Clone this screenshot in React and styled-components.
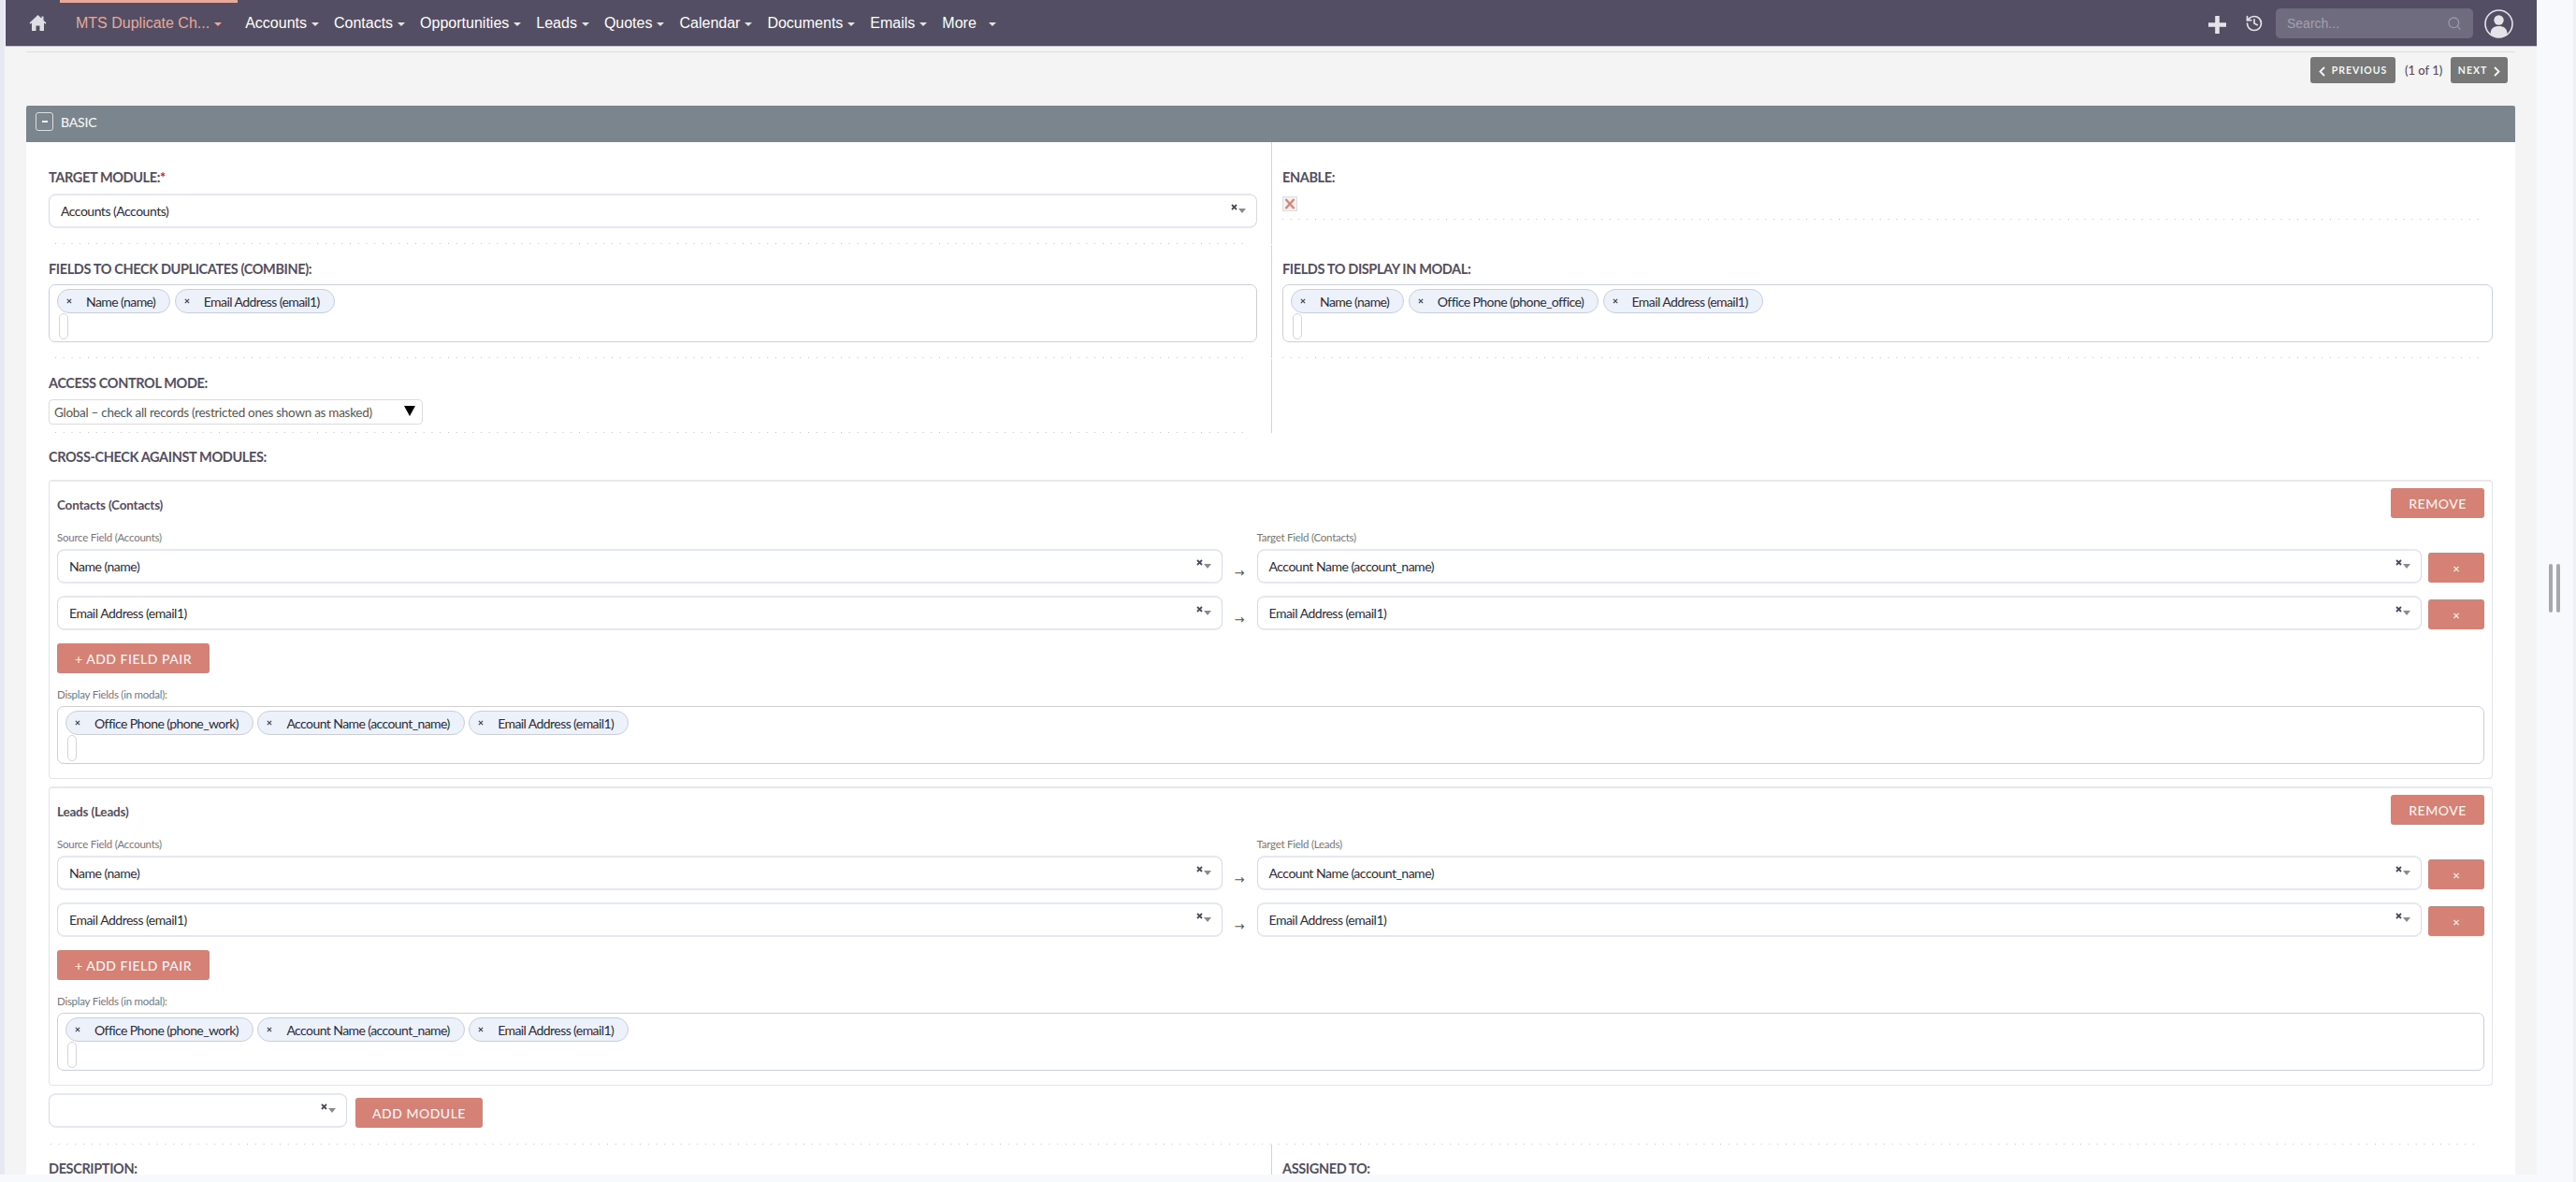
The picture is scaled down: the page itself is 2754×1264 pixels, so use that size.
import React from "react";
import styled, { createGlobalStyle } from "styled-components";
import { History, Search } from "lucide-react";

const Global = createGlobalStyle`
  html, body { margin: 0; padding: 0; background: #f7f9fd; }
  * { box-sizing: border-box; }
  body { font-family: "Lato", "Liberation Sans", sans-serif; overflow: hidden; }
`;

const Page = styled.div`
  display: flex; width: 2754px; height: 1264px; overflow: hidden; background: #f7f9fd;
`;
const LeftRail = styled.div`
  width: 6px; height: 1256px; background: #e6e9f1; border-right: 1px solid #f3f5fa; flex: none;
`;
const Shell = styled.div`
  width: 2706px; height: 1256px; flex: none; overflow: hidden; background: #f4f4f4;
`;
const Gutter = styled.div`
  flex: 1; border-right: 3px solid #eef0f7; padding: 603px 0 0 13px; display: flex; gap: 4px; align-items: flex-start;
`;
const GripBar = styled.span`
  width: 4px; height: 52px; border-radius: 2px; background: #a8a8a8;
`;

const Nav = styled.nav`
  height: 50px; background: #534e63; border-bottom: 1px solid #c4c4ca; display: flex; align-items: center;
  padding: 0 25px; font-family: "Liberation Sans", Arial, sans-serif; font-size: 16px; color: #fff;
`;
const HomeIcon = styled.svg`
  width: 19px; height: 19px; flex: none; margin-right: 14px; margin-top: -1px;
`;
const Menu = styled.div`display: flex; align-items: center; gap: 16px;`;
const MenuItem = styled.div`
  display: flex; align-items: center; height: 49px; position: relative; white-space: nowrap;
  color: ${p => (p.$active ? "#e8a99c" : "#fff")};
  padding: ${p => (p.$active ? "0 17px" : "0")};
  margin-right: ${p => (p.$active ? "-8px" : "0")};
  ${p => p.$active && `&::before { content: ""; position: absolute; left: 0; right: 0; top: 0; height: 3px; background: #e8a99c; }`}
`;
const Caret = styled.i`
  width: 0; height: 0; margin-left: ${p => p.$wide ? "13px" : "5px"}; margin-top: 2px;
  border-left: 4px solid transparent; border-right: 4px solid transparent;
  border-top: 4px solid ${p => (p.$active ? "#e8a99c" : "#e4e4e8")};
`;
const NavRight = styled.div`margin-left: auto; display: flex; align-items: center;`;
const PlusIcon = styled.svg`width: 19px; height: 19px; margin-right: 20px; margin-top: 3px;`;
const SearchBox = styled.div`
  width: 211px; height: 32px; border-radius: 5px; background: #706c7f; display: flex; align-items: center;
  justify-content: space-between; padding: 0 12px; margin: 0 12px 0 13px; color: #a3a0ae; font-size: 14px;
`;
const UserIcon = styled.svg`width: 31px; height: 31px; margin-top: 2px;`;

const Content = styled.div`padding: 5px 23px 0 22px;`;
const TopLine = styled.div`height: 1px; background: #dedede;`;
const Pager = styled.div`
  display: flex; justify-content: flex-end; align-items: center; padding: 5px 8px 0 0; height: 33px;
`;
const PagerButton = styled.div`
  height: 28px; background: #777; border-radius: 3px; color: #f6f6f6; display: flex; align-items: center;
  justify-content: center; gap: 7px; font-size: 10.5px; font-weight: 700; letter-spacing: 0.95px;
  width: ${p => p.$w}px;
`;
const PagerText = styled.span`
  color: #534e63; font-size: 13px; font-weight: 500; margin: 0 10px; width: 39px; white-space: nowrap;
`;

const Panel = styled.section`margin-top: 24px; background: #fff;`;
const PanelHead = styled.header`
  height: 39px; background: #7b858d; border-radius: 2px 2px 0 0; display: flex; align-items: center; gap: 8px;
  padding: 0 0 5px 10px; color: #f5f5f5; font-size: 14px; font-weight: 500; letter-spacing: -0.2px;
`;
const Toggle = styled.span`
  width: 19px; height: 20px; border: 1px solid #dcdfe2; border-radius: 3px; display: flex; align-items: center; justify-content: center;
  &::before { content: ""; width: 6px; height: 1.5px; background: #f5f5f5; }
`;
const PanelBody = styled.div`padding: 0 24px 0 24px;`;

const FormRow = styled.div`
  display: grid; grid-template-columns: 1308px 1fr; margin-bottom: 1px;
`;
const LeftCell = styled.div`
  border-right: 1px solid #ccd2de; padding: ${p => p.$top}px 15px 0 0;
`;
const RightCell = styled.div`
  padding: ${p => p.$top}px 0 0 11px;
`;
const Label = styled.div`
  color: #534e63; font-size: 14.5px; font-weight: 700; line-height: 20px; letter-spacing: -0.38px; white-space: nowrap;
  margin-bottom: ${p => p.$gap ?? 7}px;
  & b { color: #e02020; font-weight: 700; }
`;
const Dotted = styled.div`
  height: 1px; margin: ${p => p.$top}px ${p => p.$right ?? 0}px 0 ${p => p.$left ?? 7}px;
  background-image: linear-gradient(to right, #bfc2c9 1.2px, transparent 1.2px);
  background-size: 8.75px 1px;
`;
const SelectBox = styled.div`
  height: 37px; display: flex; align-items: center; background: #fff; border-radius: 8px; padding: 0 11px 0 12px;
  border: 1px solid #d6dbe8; border-top: 2px solid #e4e8f0; border-bottom: 2px solid #e4e8f0;
  color: #2c2c3a; font-size: 14px; letter-spacing: -0.5px; width: ${p => (p.$w ? p.$w + "px" : "auto")};
`;
const SelectValue = styled.span`flex: 1; white-space: nowrap;`;
const ClearMark = styled.svg`
  width: 7px; height: 7px; align-self: flex-start; margin-top: 9px; margin-right: 1px; flex: none;
`;
const SelectArrow = styled.i`
  align-self: flex-start; margin-top: 14px; flex: none; width: 0; height: 0;
  border-left: 4px solid transparent; border-right: 4px solid transparent; border-top: 5px solid #8b8b8b;
`;
const MultiBox = styled.div`
  height: 62px; border: 1px solid #c9cfde; border-radius: 7px; padding: 4px 8px 0; background: #fff;
`;
const ChipRow = styled.div`display: flex; gap: 4.5px;`;
const Chip = styled.span`
  height: 26px; display: flex; align-items: center; background: #edf2fa; border: 1px solid #c6cfe0; border-radius: 13px;
  padding: 0 15px 0 9px; font-size: 14px; letter-spacing: -0.58px; color: #2c2c3a; white-space: nowrap;
`;
const ChipX = styled.svg`width: 6px; height: 6px; margin-right: 15px; flex: none;`;
const InputPill = styled.div`
  width: 10px; height: 28px; margin-left: 2px; border: 1px solid #d2d5dd; border-radius: 5px;
`;
const CheckBox = styled.div`
  width: 16px; height: 16px; background: #f2f2f2; border: 1px solid #dcdde2; display: flex; align-items: center; justify-content: center;
`;
const Cross = styled.div`margin-top: 16px;`;
const ModuleCard = styled.article`
  height: 320px; border: 1px solid #e1e4ec; border-top: 2px solid #e7e9ef; border-radius: 4px; padding: 7px 8px 0; margin-bottom: 8px;
`;
const CardHead = styled.div`display: flex; justify-content: space-between; align-items: flex-start;`;
const CardTitle = styled.h3`
  margin: 8px 0 0; font-size: 13.5px; line-height: 20px; font-weight: 700; letter-spacing: -0.2px; color: #534e63;
`;
const CoralButton = styled.button`
  height: 32px; width: ${p => p.$w}px; border: 0; border-radius: 3px; background: #d58175; color: #fbf3f1; padding: 0;
  font: 500 14px "Lato", sans-serif; letter-spacing: 0.5px; flex: none; white-space: nowrap;
`;
const PairGrid = styled.div`
  display: grid; grid-template-columns: 1fr 37px 1fr 67px; margin-top: ${p => p.$top}px;
`;
const SmallLabel = styled.div`
  color: #777; font-size: 11.5px; line-height: 14px; letter-spacing: -0.25px; white-space: nowrap; margin-top: ${p => p.$top ?? 0}px; margin-bottom: ${p => p.$bottom ?? 0}px;
`;
const FlowArrow = styled.span`
  font-size: 13px; line-height: 16px; color: #555; text-align: center; padding-top: 18px; font-family: "DejaVu Sans", sans-serif;
`;
const RemovePair = styled(CoralButton)`
  width: 60px; margin: 4px 0 0 7px; font-size: 13px; padding-top: 2px; letter-spacing: 0;
`;
const AddPair = styled(CoralButton)`margin: 14px 0 16px; display: block;`;
const AddRow = styled.div`display: flex; align-items: flex-end; gap: 9px;`;
const Rest = styled.div`height: 40px;`;
const NativeSelect = styled.div`
  width: 400px; height: 27px; border: 1px solid #dcdcdf; border-radius: 4px; padding: 0 7px 0 5px; display: flex; align-items: center;
  justify-content: space-between; color: #555; font-size: 13.5px; letter-spacing: -0.28px; white-space: nowrap;
`;
const NativeArrow = styled.i`
  width: 0; height: 0; margin-top: -2px; border-left: 6.5px solid transparent; border-right: 6.5px solid transparent; border-top: 11px solid #000;
`;

const X = ({ as: Comp, color = "#4a4a5e", width = 1.8 }) => (
  <Comp viewBox="0 0 7 7">
    <path d="M1 1L6 6M6 1L1 6" stroke={color} strokeWidth={width} fill="none" />
  </Comp>
);

const Select = ({ value, w }) => (
  <SelectBox $w={w}>
    <SelectValue>{value}</SelectValue>
    <X as={ClearMark} />
    <SelectArrow />
  </SelectBox>
);

const Multi = ({ items }) => (
  <MultiBox>
    <ChipRow>
      {items.map(t => (
        <Chip key={t}>
          <X as={ChipX} width={1.5} />
          {t}
        </Chip>
      ))}
    </ChipRow>
    <InputPill />
  </MultiBox>
);

const Chevron = ({ left }) => (
  <svg width="7" height="11" viewBox="0 0 7 11" style={{ marginTop: 2 }}>
    <path d={left ? "M6 1L1.5 5.5L6 10" : "M1 1L5.5 5.5L1 10"} stroke="#f6f6f6" strokeWidth="1.8" fill="none" />
  </svg>
);

const menus = ["Accounts", "Contacts", "Opportunities", "Leads", "Quotes", "Calendar", "Documents", "Emails"];
const displayItems = ["Office Phone (phone_work)", "Account Name (account_name)", "Email Address (email1)"];

const ModuleBlock = ({ title, target }) => (
  <ModuleCard>
    <CardHead>
      <CardTitle>{title}</CardTitle>
      <CoralButton $w={100}>REMOVE</CoralButton>
    </CardHead>
    <PairGrid $top={14}>
      <SmallLabel $bottom={5}>Source Field (Accounts)</SmallLabel>
      <span />
      <SmallLabel $bottom={5}>Target Field ({target})</SmallLabel>
      <span />
    </PairGrid>
    <PairGrid $top={0}>
      <Select value="Name (name)" />
      <FlowArrow>→</FlowArrow>
      <Select value="Account Name (account_name)" />
      <RemovePair>×</RemovePair>
    </PairGrid>
    <PairGrid $top={13}>
      <Select value="Email Address (email1)" />
      <FlowArrow>→</FlowArrow>
      <Select value="Email Address (email1)" />
      <RemovePair>×</RemovePair>
    </PairGrid>
    <AddPair $w={163}>+ ADD FIELD PAIR</AddPair>
    <SmallLabel $bottom={5}>Display Fields (in modal):</SmallLabel>
    <Multi items={displayItems} />
  </ModuleCard>
);

export default function App() {
  return (
    <Page>
      <Global />
      <LeftRail />
      <Shell>
        <Nav>
          <HomeIcon viewBox="0 0 19 19">
            <path d="M9.5 1L0.5 9.6L1.6 10.8L3 9.6V18H7.5V12.5H11.5V18H16V9.6L17.4 10.8L18.5 9.6L15.5 6.8V2.5H13.5V4.8Z" fill="#dedee3" />
          </HomeIcon>
          <Menu>
            <MenuItem $active>
              MTS Duplicate Ch...
              <Caret $active />
            </MenuItem>
            {menus.map(m => (
              <MenuItem key={m}>
                {m}
                <Caret />
              </MenuItem>
            ))}
            <MenuItem>
              More
              <Caret $wide />
            </MenuItem>
          </Menu>
          <NavRight>
            <PlusIcon viewBox="0 0 19 19">
              <path d="M7.2 0H11.8V7.2H19V11.8H11.8V19H7.2V11.8H0V7.2H7.2Z" fill="#e4e4e8" />
            </PlusIcon>
            <History size={20} color="#e4e4e8" strokeWidth={2} />
            <SearchBox>
              <span>Search...</span>
              <Search size={16} color="#9a97a6" strokeWidth={2} />
            </SearchBox>
            <UserIcon viewBox="0 0 31 31">
              <circle cx="15.5" cy="15.5" r="14.5" fill="none" stroke="#e4e4e8" strokeWidth="1.6" />
              <circle cx="15.5" cy="11.5" r="5.2" fill="#e4e4e8" />
              <path d="M6.5 26.5C6.5 20.5 10 18 15.5 18C21 18 24.5 20.5 24.5 26.5C22 28.7 19 30 15.5 30C12 30 9 28.7 6.5 26.5Z" fill="#e4e4e8" />
            </UserIcon>
          </NavRight>
        </Nav>
        <Content>
          <TopLine />
          <Pager>
            <PagerButton $w={91}>
              <Chevron left />
              PREVIOUS
            </PagerButton>
            <PagerText>(1 of 1)</PagerText>
            <PagerButton $w={61}>
              NEXT
              <Chevron />
            </PagerButton>
          </Pager>
          <Panel>
            <PanelHead>
              <Toggle />
              BASIC
            </PanelHead>
            <PanelBody>
              <FormRow>
                <LeftCell $top={28}>
                  <Label>
                    TARGET MODULE:<b>*</b>
                  </Label>
                  <Select value="Accounts (Accounts)" />
                  <Dotted $top={16} $right={14} />
                </LeftCell>
                <RightCell $top={28}>
                  <Label $gap={10}>ENABLE:</Label>
                  <CheckBox>
                    <svg width="12" height="12" viewBox="0 0 12 12">
                      <path d="M1.5 1L10.5 11M10.5 1L1.5 11" stroke="#dc8275" strokeWidth="2.4" fill="none" />
                    </svg>
                  </CheckBox>
                  <Dotted $top={8} $left={0} $right={14} />
                </RightCell>
              </FormRow>
              <FormRow>
                <LeftCell $top={16}>
                  <Label $gap={6}>FIELDS TO CHECK DUPLICATES (COMBINE):</Label>
                  <Multi items={["Name (name)", "Email Address (email1)"]} />
                  <Dotted $top={16} $right={14} />
                </LeftCell>
                <RightCell $top={16}>
                  <Label $gap={6}>FIELDS TO DISPLAY IN MODAL:</Label>
                  <Multi items={["Name (name)", "Office Phone (phone_office)", "Email Address (email1)"]} />
                  <Dotted $top={16} $left={0} $right={14} />
                </RightCell>
              </FormRow>
              <FormRow>
                <LeftCell $top={16}>
                  <Label>ACCESS CONTROL MODE:</Label>
                  <NativeSelect>
                    Global – check all records (restricted ones shown as masked)
                    <NativeArrow />
                  </NativeSelect>
                  <Dotted $top={8} $right={14} />
                </LeftCell>
                <span />
              </FormRow>
              <Cross>
                <Label $gap={14}>CROSS-CHECK AGAINST MODULES:</Label>
                <ModuleBlock title="Contacts (Contacts)" target="Contacts" />
                <ModuleBlock title="Leads (Leads)" target="Leads" />
              </Cross>
              <AddRow>
                <Select w={319} value="" />
                <CoralButton $w={136}>ADD MODULE</CoralButton>
              </AddRow>
              <Dotted $top={17} $left={2} $right={14} />
              <FormRow>
                <LeftCell $top={16}>
                  <Label>DESCRIPTION:</Label>
                  <Rest />
                </LeftCell>
                <RightCell $top={16}>
                  <Label>ASSIGNED TO:</Label>
                </RightCell>
              </FormRow>
            </PanelBody>
          </Panel>
        </Content>
      </Shell>
      <Gutter>
        <GripBar />
        <GripBar />
      </Gutter>
    </Page>
  );
}
